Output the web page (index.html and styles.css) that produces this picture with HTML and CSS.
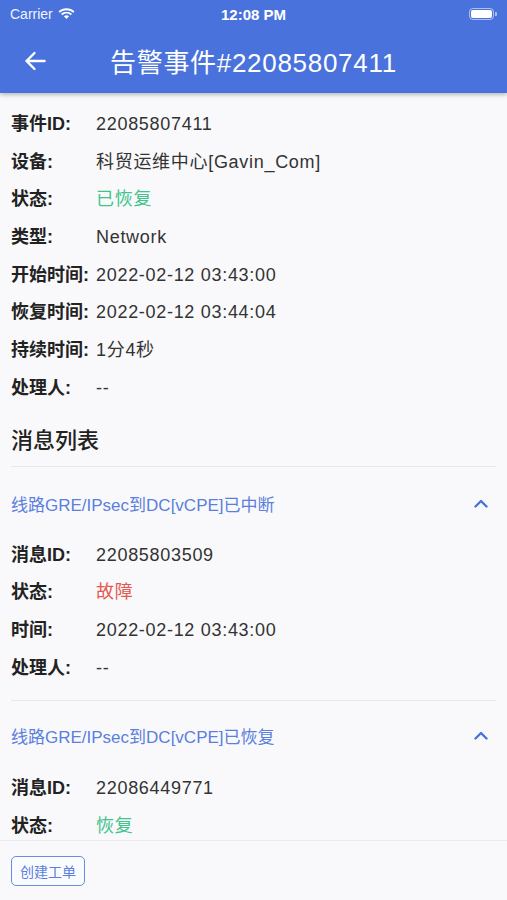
FILE: index.html
```html
<!DOCTYPE html>
<html lang="zh-CN">
<head>
    <meta charset="UTF-8">
    <meta name="viewport" content="width=device-width, initial-scale=1.0">
    <title>告警事件#22085807411</title>
    <link rel="stylesheet" href="styles.css">
</head>
<body>
    <div class="app">
        <!-- Header: status bar + title -->
        <header class="appbar">
            <div class="statusbar">
                <div class="carrier">
                    Carrier
                    <svg class="wifi" width="17" height="12" viewBox="0 0 17 12">
                        <path d="M8.5 2.2c2.6 0 4.9 1 6.7 2.6l1.3-1.4C14.4 1.5 11.6.3 8.5.3S2.6 1.5.5 3.4l1.3 1.4C3.6 3.2 5.9 2.2 8.5 2.2z" fill="#fff"/>
                        <path d="M8.5 5.6c1.6 0 3 .6 4.2 1.6l1.3-1.4C12.5 4.5 10.6 3.7 8.5 3.7S4.5 4.5 3 5.8l1.3 1.4c1.2-1 2.6-1.6 4.2-1.6z" fill="#fff"/>
                        <path d="M8.5 7.2c-1 0-1.9.4-2.6 1l2.6 2.9 2.6-2.9c-.7-.6-1.6-1-2.6-1z" fill="#fff"/>
                    </svg>
                </div>
                <div class="clock">12:08 PM</div>
                <div class="battery">
                    <span class="battery-body"><span class="battery-level"></span></span>
                    <span class="battery-tip"></span>
                </div>
            </div>
            <div class="titlebar">
                <svg class="back" width="22" height="20" viewBox="0 0 22 20">
                    <path d="M20.5 10H2.5M10.5 2L2.5 10l8 8" fill="none" stroke="#fff" stroke-width="2.4" stroke-linecap="round" stroke-linejoin="round"/>
                </svg>
                <h1 class="title">告警事件#22085807411</h1>
            </div>
        </header>

        <main class="content">
            <div class="info">
                <div class="row"><span class="label">事件ID:</span><span class="value">22085807411</span></div>
                <div class="row"><span class="label">设备:</span><span class="value">科贸运维中心[Gavin_Com]</span></div>
                <div class="row"><span class="label">状态:</span><span class="value ok">已恢复</span></div>
                <div class="row"><span class="label">类型:</span><span class="value">Network</span></div>
                <div class="row"><span class="label">开始时间:</span><span class="value">2022-02-12 03:43:00</span></div>
                <div class="row"><span class="label">恢复时间:</span><span class="value">2022-02-12 03:44:04</span></div>
                <div class="row"><span class="label">持续时间:</span><span class="value">1分4秒</span></div>
                <div class="row"><span class="label">处理人:</span><span class="value">--</span></div>
            </div>

            <h2 class="section-title">消息列表</h2>

            <div class="message">
                <div class="message-head">
                    <span class="message-title">线路GRE/IPsec到DC[vCPE]已中断</span>
                    <svg class="chevron" width="14" height="9" viewBox="0 0 14 9">
                        <path d="M1.5 7.5L7 2l5.5 5.5" fill="none" stroke="#4a72dc" stroke-width="2.4" stroke-linecap="round" stroke-linejoin="round"/>
                    </svg>
                </div>
                <div class="row"><span class="label">消息ID:</span><span class="value">22085803509</span></div>
                <div class="row"><span class="label">状态:</span><span class="value bad">故障</span></div>
                <div class="row"><span class="label">时间:</span><span class="value">2022-02-12 03:43:00</span></div>
                <div class="row"><span class="label">处理人:</span><span class="value">--</span></div>
            </div>

            <div class="message">
                <div class="message-head">
                    <span class="message-title">线路GRE/IPsec到DC[vCPE]已恢复</span>
                    <svg class="chevron" width="14" height="9" viewBox="0 0 14 9">
                        <path d="M1.5 7.5L7 2l5.5 5.5" fill="none" stroke="#4a72dc" stroke-width="2.4" stroke-linecap="round" stroke-linejoin="round"/>
                    </svg>
                </div>
                <div class="row"><span class="label">消息ID:</span><span class="value">22086449771</span></div>
                <div class="row"><span class="label">状态:</span><span class="value ok">恢复</span></div>
            </div>
        </main>

        <footer class="footer">
            <button class="btn-outline">创建工单</button>
        </footer>
    </div>
</body>
</html>
```

FILE: styles.css
```css
* {
  box-sizing: border-box;
}

body {
  margin: 0;
  padding: 0;
  font-family: "Liberation Sans", "Noto Sans CJK SC", sans-serif;
  background: #f9f9fb;
  color: #222;
}

.app {
  display: flex;
  flex-direction: column;
  height: 100vh;
  overflow: hidden;
}

/* Top: blue app bar */
.appbar {
  flex: none;
  height: 93px;
  background: #4a72dc;
  color: #fff;
  box-shadow: 0 2px 4px rgba(0, 0, 0, 0.25);
  position: relative;
  z-index: 2;
}

.statusbar {
  height: 28px;
  display: flex;
  align-items: center;
  justify-content: space-between;
  padding: 0 10px;
  position: relative;
}
.carrier {
  display: flex;
  align-items: center;
  gap: 5px;
  font-size: 14px;
  color: #eef2ff;
}
.clock {
  position: absolute;
  left: 0;
  right: 0;
  text-align: center;
  font-size: 15px;
  font-weight: bold;
  pointer-events: none;
}
.battery {
  display: flex;
  align-items: center;
}
.battery-body {
  width: 25px;
  height: 12px;
  border: 1.5px solid rgba(255, 255, 255, 0.55);
  border-radius: 4px;
  padding: 1px;
  display: flex;
}
.battery-level {
  flex: 1;
  background: #fff;
  border-radius: 2px;
}
.battery-tip {
  width: 2px;
  height: 4px;
  margin-left: 1px;
  background: rgba(255, 255, 255, 0.55);
  border-radius: 0 1px 1px 0;
}

.titlebar {
  height: 65px;
  display: flex;
  align-items: center;
  padding-left: 24px;
}
.back {
  flex: none;
}
.title {
  margin: 0 0 0 64px;
  font-size: 26px;
  font-weight: normal;
  letter-spacing: 0.7px;
}

/* Middle: scrolling content */
.content {
  flex: 1;
  overflow: hidden;
  padding: 13px 11px 0;
}

.row {
  display: flex;
  align-items: baseline;
  height: 37.7px;
  line-height: 37.7px;
  font-size: 18px;
}
.label {
  width: 85px;
  flex: none;
  font-weight: bold;
  color: #222;
}
.value {
  color: #333;
  letter-spacing: 0.7px;
  white-space: nowrap;
}
.value.ok {
  color: #42c38c;
}
.value.bad {
  color: #e5584f;
}

.section-title {
  margin: 19px 0 0;
  height: 40px;
  font-size: 22px;
  font-weight: 500;
  color: #222;
  border-bottom: 1px solid #e6e7ec;
  line-height: 28px;
}

.message {
  border-bottom: 1px solid #e6e7ec;
  padding-bottom: 13px;
}
.message + .message .message-head {
  padding-top: 0;
  height: 69px;
}
.message-head {
  height: 70px;
  display: flex;
  align-items: center;
  justify-content: space-between;
  padding: 3px 8px 0 0;
}
.message-title {
  font-size: 17px;
  color: #5a7fdd;
}

/* Bottom: action bar */
.footer {
  flex: none;
  height: 60px;
  border-top: 1px solid #ececf0;
  background: #f9f9fb;
  display: flex;
  align-items: center;
  padding: 0 11px;
}
.btn-outline {
  font-family: inherit;
  font-size: 14px;
  color: #5a7fdd;
  background: #fafbff;
  border: 1.5px solid #6c8ce2;
  border-radius: 5px;
  height: 30px;
  padding: 0 8px;
}
```
